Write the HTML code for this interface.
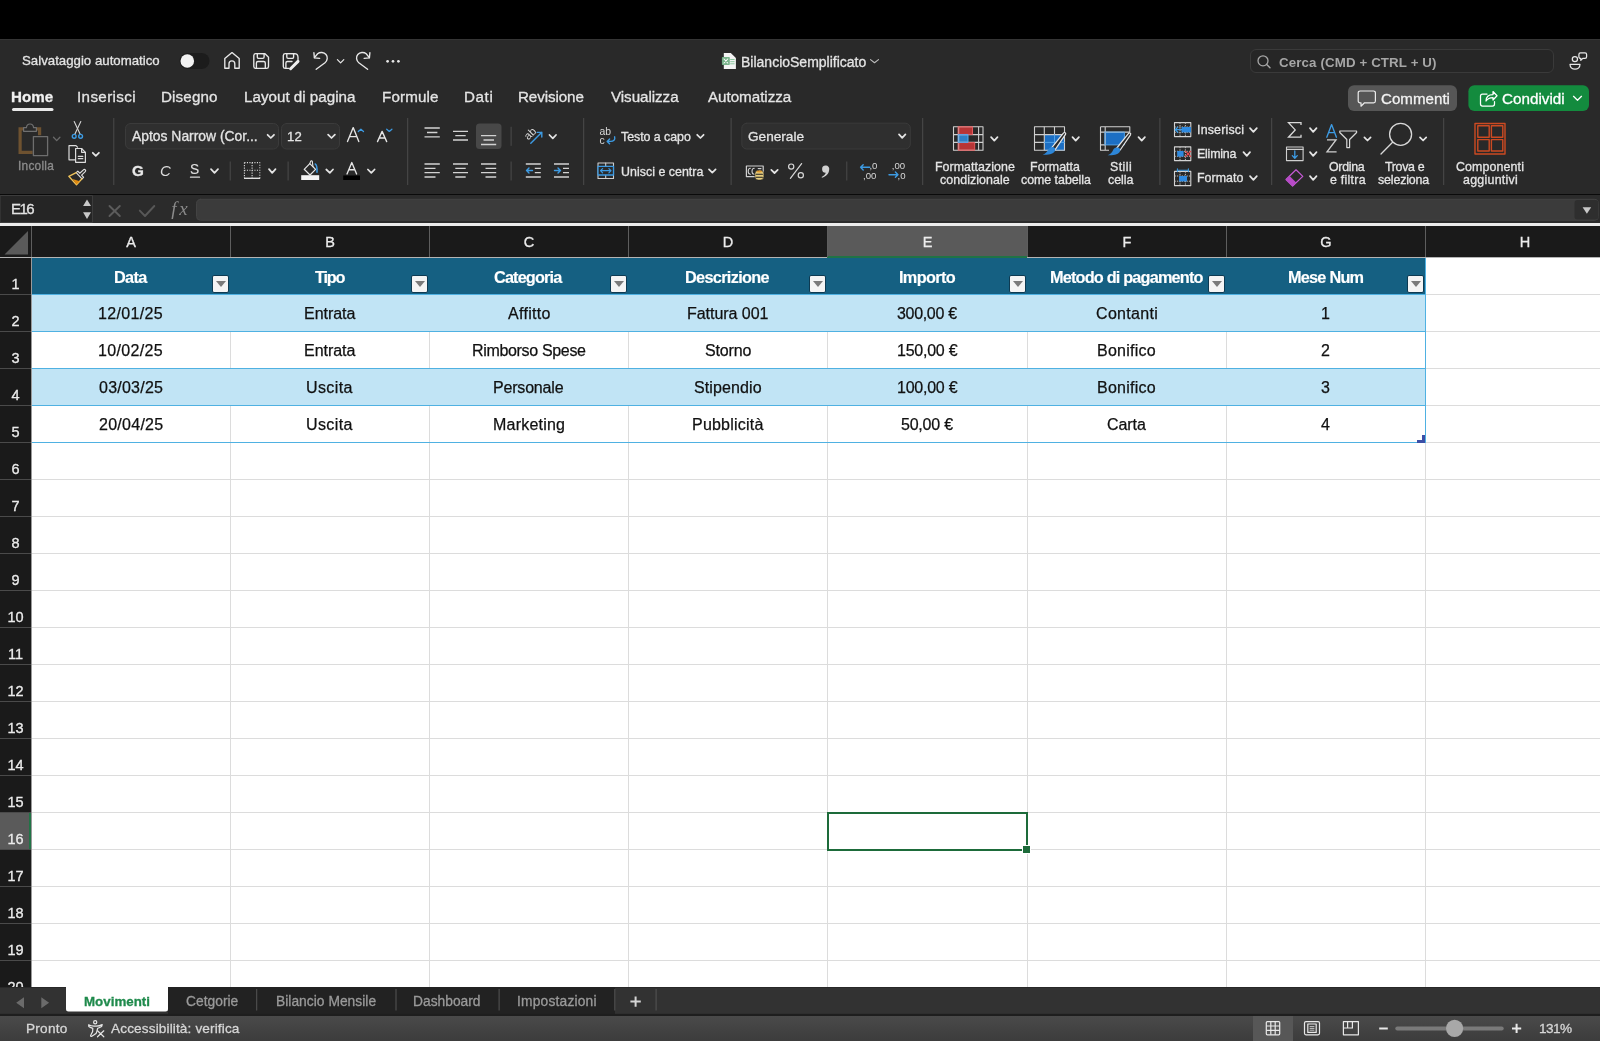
<!DOCTYPE html>
<html><head><meta charset="utf-8">
<style>
*{margin:0;padding:0;box-sizing:border-box}
html,body{width:1600px;height:1041px;overflow:hidden;background:#292929;font-family:"Liberation Sans",sans-serif}
.a{position:absolute;white-space:nowrap}
.t{position:absolute;white-space:nowrap;line-height:1;color:#e6e6e6;-webkit-text-stroke:0.3px currentColor;will-change:transform}
svg{position:absolute;overflow:visible}
#grid{position:absolute;left:0;top:226px;width:1600px;height:761px;background:#fff;overflow:hidden}
.ch{position:absolute;top:0;height:31px;background:#1a1a1a;color:#e8e8e8;font-size:15px;text-align:center;line-height:31px}
.rh{position:absolute;left:0;width:31px;background:#1a1a1a;color:#e8e8e8;font-size:15px;text-align:center}
.cell{position:absolute;font-size:16px;color:#111;text-align:center}
.hd{position:absolute;font-size:16px;font-weight:bold;color:#fff;text-align:center}
.fb{position:absolute;width:17px;height:17.5px;background:#f4f4f4;border:1px solid #0d3a52;border-radius:2px}
.fb:after{content:"";position:absolute;left:3px;top:5px;border-left:5px solid transparent;border-right:5px solid transparent;border-top:6px solid #7a7a7a}
.tab{position:absolute;top:987px;height:28px;color:#8f8f8f;font-size:13.5px;line-height:28px;text-align:center}
.sep{position:absolute;width:1px;background:#4a4a4a}
.lbl{position:absolute;white-space:nowrap;line-height:1;color:#e6e6e6;font-size:12.4px;text-align:center}
</style></head><body>
<!-- top black bar -->
<div class="a" style="left:0;top:0;width:1600px;height:39px;background:#000"></div>
<div class="a" style="left:0;top:39px;width:1600px;height:1px;background:#353535"></div>

<!-- ribbon bottom -->
<div class="a" style="left:0;top:193.6px;width:1600px;height:1.6px;background:#0a0a0a"></div>
<!-- formula bar -->
<div class="a" style="left:0;top:195px;width:1600px;height:28px;background:#2b2b2b"></div>
<div class="a" style="left:0;top:223px;width:1600px;height:3.4px;background:#ececec"></div>

<div class="a" style="left:32px;top:258px;width:1568px;height:729px;background:#fff"></div>
<div class="a" style="left:32px;top:294px;width:1568px;height:1px;background:#dcdcdc"></div>
<div class="a" style="left:32px;top:331px;width:1568px;height:1px;background:#dcdcdc"></div>
<div class="a" style="left:32px;top:368px;width:1568px;height:1px;background:#dcdcdc"></div>
<div class="a" style="left:32px;top:405px;width:1568px;height:1px;background:#dcdcdc"></div>
<div class="a" style="left:32px;top:442px;width:1568px;height:1px;background:#dcdcdc"></div>
<div class="a" style="left:32px;top:479px;width:1568px;height:1px;background:#dcdcdc"></div>
<div class="a" style="left:32px;top:516px;width:1568px;height:1px;background:#dcdcdc"></div>
<div class="a" style="left:32px;top:553px;width:1568px;height:1px;background:#dcdcdc"></div>
<div class="a" style="left:32px;top:590px;width:1568px;height:1px;background:#dcdcdc"></div>
<div class="a" style="left:32px;top:627px;width:1568px;height:1px;background:#dcdcdc"></div>
<div class="a" style="left:32px;top:664px;width:1568px;height:1px;background:#dcdcdc"></div>
<div class="a" style="left:32px;top:701px;width:1568px;height:1px;background:#dcdcdc"></div>
<div class="a" style="left:32px;top:738px;width:1568px;height:1px;background:#dcdcdc"></div>
<div class="a" style="left:32px;top:775px;width:1568px;height:1px;background:#dcdcdc"></div>
<div class="a" style="left:32px;top:812px;width:1568px;height:1px;background:#dcdcdc"></div>
<div class="a" style="left:32px;top:849px;width:1568px;height:1px;background:#dcdcdc"></div>
<div class="a" style="left:32px;top:886px;width:1568px;height:1px;background:#dcdcdc"></div>
<div class="a" style="left:32px;top:923px;width:1568px;height:1px;background:#dcdcdc"></div>
<div class="a" style="left:32px;top:960px;width:1568px;height:1px;background:#dcdcdc"></div>
<div class="a" style="left:230px;top:258px;width:1px;height:729px;background:#dcdcdc"></div>
<div class="a" style="left:429px;top:258px;width:1px;height:729px;background:#dcdcdc"></div>
<div class="a" style="left:628px;top:258px;width:1px;height:729px;background:#dcdcdc"></div>
<div class="a" style="left:827px;top:258px;width:1px;height:729px;background:#dcdcdc"></div>
<div class="a" style="left:1027px;top:258px;width:1px;height:729px;background:#dcdcdc"></div>
<div class="a" style="left:1226px;top:258px;width:1px;height:729px;background:#dcdcdc"></div>
<div class="a" style="left:1425px;top:258px;width:1px;height:729px;background:#dcdcdc"></div>
<div class="a" style="left:32px;top:258px;width:1393px;height:36px;background:#156082"></div>
<div class="a" style="left:32px;top:295px;width:1393px;height:36px;background:#c1e4f5"></div>
<div class="a" style="left:32px;top:369px;width:1393px;height:36px;background:#c1e4f5"></div>
<div class="a" style="left:32px;top:294px;width:1393px;height:1px;background:#4fb1e2"></div>
<div class="a" style="left:32px;top:331px;width:1393px;height:1px;background:#4fb1e2"></div>
<div class="a" style="left:32px;top:368px;width:1393px;height:1px;background:#4fb1e2"></div>
<div class="a" style="left:32px;top:405px;width:1393px;height:1px;background:#4fb1e2"></div>
<div class="a" style="left:32px;top:442px;width:1393px;height:1px;background:#4fb1e2"></div>
<div class="a" style="left:1425px;top:258px;width:1px;height:185px;background:#4fb1e2"></div>
<div class="a" style="left:0px;top:226px;width:1600px;height:31px;background:#1a1a1a"></div>
<div class="a" style="left:0px;top:257px;width:1600px;height:1px;background:#b4b4b4"></div>
<div class="a" style="left:827px;top:226px;width:200px;height:30px;background:#5a5a5a"></div>
<div class="a" style="left:827px;top:256px;width:200px;height:2px;background:#217346"></div>
<div class="a" style="left:31px;top:226px;width:1px;height:31px;background:#5e5e5e"></div>
<div class="a" style="left:230px;top:226px;width:1px;height:31px;background:#5e5e5e"></div>
<div class="a" style="left:429px;top:226px;width:1px;height:31px;background:#5e5e5e"></div>
<div class="a" style="left:628px;top:226px;width:1px;height:31px;background:#5e5e5e"></div>
<div class="a" style="left:827px;top:226px;width:1px;height:31px;background:#5e5e5e"></div>
<div class="a" style="left:1027px;top:226px;width:1px;height:31px;background:#5e5e5e"></div>
<div class="a" style="left:1226px;top:226px;width:1px;height:31px;background:#5e5e5e"></div>
<div class="a" style="left:1425px;top:226px;width:1px;height:31px;background:#5e5e5e"></div>
<div class="t" style="left:32px;top:235px;width:198px;text-align:center;font-size:14.5px;color:#ececec">A</div>
<div class="t" style="left:231px;top:235px;width:198px;text-align:center;font-size:14.5px;color:#ececec">B</div>
<div class="t" style="left:430px;top:235px;width:198px;text-align:center;font-size:14.5px;color:#ececec">C</div>
<div class="t" style="left:629px;top:235px;width:198px;text-align:center;font-size:14.5px;color:#ececec">D</div>
<div class="t" style="left:828px;top:235px;width:199px;text-align:center;font-size:14.5px;color:#ececec">E</div>
<div class="t" style="left:1028px;top:235px;width:198px;text-align:center;font-size:14.5px;color:#ececec">F</div>
<div class="t" style="left:1227px;top:235px;width:198px;text-align:center;font-size:14.5px;color:#ececec">G</div>
<div class="t" style="left:1426px;top:235px;width:198px;text-align:center;font-size:14.5px;color:#ececec">H</div>
<div class="a" style="left:0px;top:226px;width:31px;height:31px;background:#1a1a1a"></div>
<svg style="left:0;top:226px" width="31" height="31"><path d="M4.5 28.5 L28 5 L28 28.5 Z" fill="#5a5a5a"/></svg>
<div class="a" style="left:0px;top:258px;width:31px;height:729px;background:#1a1a1a"></div>
<div class="a" style="left:0px;top:812px;width:31px;height:37px;background:#5a5a5a"></div>
<div class="a" style="left:29px;top:812px;width:2px;height:37px;background:#217346"></div>
<div class="a" style="left:31px;top:258px;width:1px;height:729px;background:#9a9a9a"></div>
<div class="a" style="left:0px;top:294px;width:31px;height:1px;background:#4a4a4a"></div>
<div class="a" style="left:0px;top:331px;width:31px;height:1px;background:#4a4a4a"></div>
<div class="a" style="left:0px;top:368px;width:31px;height:1px;background:#4a4a4a"></div>
<div class="a" style="left:0px;top:405px;width:31px;height:1px;background:#4a4a4a"></div>
<div class="a" style="left:0px;top:442px;width:31px;height:1px;background:#4a4a4a"></div>
<div class="a" style="left:0px;top:479px;width:31px;height:1px;background:#4a4a4a"></div>
<div class="a" style="left:0px;top:516px;width:31px;height:1px;background:#4a4a4a"></div>
<div class="a" style="left:0px;top:553px;width:31px;height:1px;background:#4a4a4a"></div>
<div class="a" style="left:0px;top:590px;width:31px;height:1px;background:#4a4a4a"></div>
<div class="a" style="left:0px;top:627px;width:31px;height:1px;background:#4a4a4a"></div>
<div class="a" style="left:0px;top:664px;width:31px;height:1px;background:#4a4a4a"></div>
<div class="a" style="left:0px;top:701px;width:31px;height:1px;background:#4a4a4a"></div>
<div class="a" style="left:0px;top:738px;width:31px;height:1px;background:#4a4a4a"></div>
<div class="a" style="left:0px;top:775px;width:31px;height:1px;background:#4a4a4a"></div>
<div class="a" style="left:0px;top:812px;width:31px;height:1px;background:#4a4a4a"></div>
<div class="a" style="left:0px;top:849px;width:31px;height:1px;background:#4a4a4a"></div>
<div class="a" style="left:0px;top:886px;width:31px;height:1px;background:#4a4a4a"></div>
<div class="a" style="left:0px;top:923px;width:31px;height:1px;background:#4a4a4a"></div>
<div class="a" style="left:0px;top:960px;width:31px;height:1px;background:#4a4a4a"></div>
<div class="t" style="left:0;top:277px;width:31px;text-align:center;font-size:14.5px;color:#ececec">1</div>
<div class="t" style="left:0;top:314px;width:31px;text-align:center;font-size:14.5px;color:#ececec">2</div>
<div class="t" style="left:0;top:351px;width:31px;text-align:center;font-size:14.5px;color:#ececec">3</div>
<div class="t" style="left:0;top:388px;width:31px;text-align:center;font-size:14.5px;color:#ececec">4</div>
<div class="t" style="left:0;top:425px;width:31px;text-align:center;font-size:14.5px;color:#ececec">5</div>
<div class="t" style="left:0;top:462px;width:31px;text-align:center;font-size:14.5px;color:#ececec">6</div>
<div class="t" style="left:0;top:499px;width:31px;text-align:center;font-size:14.5px;color:#ececec">7</div>
<div class="t" style="left:0;top:536px;width:31px;text-align:center;font-size:14.5px;color:#ececec">8</div>
<div class="t" style="left:0;top:573px;width:31px;text-align:center;font-size:14.5px;color:#ececec">9</div>
<div class="t" style="left:0;top:610px;width:31px;text-align:center;font-size:14.5px;color:#ececec">10</div>
<div class="t" style="left:0;top:647px;width:31px;text-align:center;font-size:14.5px;color:#ececec">11</div>
<div class="t" style="left:0;top:684px;width:31px;text-align:center;font-size:14.5px;color:#ececec">12</div>
<div class="t" style="left:0;top:721px;width:31px;text-align:center;font-size:14.5px;color:#ececec">13</div>
<div class="t" style="left:0;top:758px;width:31px;text-align:center;font-size:14.5px;color:#ececec">14</div>
<div class="t" style="left:0;top:795px;width:31px;text-align:center;font-size:14.5px;color:#ececec">15</div>
<div class="t" style="left:0;top:832px;width:31px;text-align:center;font-size:14.5px;color:#ececec">16</div>
<div class="t" style="left:0;top:869px;width:31px;text-align:center;font-size:14.5px;color:#ececec">17</div>
<div class="t" style="left:0;top:906px;width:31px;text-align:center;font-size:14.5px;color:#ececec">18</div>
<div class="t" style="left:0;top:943px;width:31px;text-align:center;font-size:14.5px;color:#ececec">19</div>
<div class="t" style="left:0;top:980px;width:31px;text-align:center;font-size:14.5px;color:#ececec">20</div>
<div class="t" style="left:113.65px;top:268.80px;font-size:16.3px;font-weight:bold;color:#fff;letter-spacing:-0.633px;-webkit-text-stroke:0.15px currentColor">Data</div>
<div class="fb" style="left:212px;top:275px"></div>
<div class="t" style="left:315.05px;top:268.80px;font-size:16.3px;font-weight:bold;color:#fff;letter-spacing:-1.233px;-webkit-text-stroke:0.15px currentColor">Tipo</div>
<div class="fb" style="left:411px;top:275px"></div>
<div class="t" style="left:494.43px;top:268.80px;font-size:16.3px;font-weight:bold;color:#fff;letter-spacing:-0.856px;-webkit-text-stroke:0.15px currentColor">Categoria</div>
<div class="fb" style="left:610px;top:275px"></div>
<div class="t" style="left:685.40px;top:268.80px;font-size:16.3px;font-weight:bold;color:#fff;letter-spacing:-0.680px;-webkit-text-stroke:0.15px currentColor">Descrizione</div>
<div class="fb" style="left:809px;top:275px"></div>
<div class="t" style="left:898.90px;top:268.80px;font-size:16.3px;font-weight:bold;color:#fff;letter-spacing:-0.650px;-webkit-text-stroke:0.15px currentColor">Importo</div>
<div class="fb" style="left:1009px;top:275px"></div>
<div class="t" style="left:1049.90px;top:268.80px;font-size:16.3px;font-weight:bold;color:#fff;letter-spacing:-0.817px;-webkit-text-stroke:0.15px currentColor">Metodo di pagamento</div>
<div class="fb" style="left:1208px;top:275px"></div>
<div class="t" style="left:1287.90px;top:268.80px;font-size:16.3px;font-weight:bold;color:#fff;letter-spacing:-0.771px;-webkit-text-stroke:0.15px currentColor">Mese Num</div>
<div class="fb" style="left:1407px;top:275px"></div>
<div class="t" style="left:98.45px;top:306.16px;font-size:16px;color:#111;letter-spacing:0.329px;-webkit-text-stroke:0.25px currentColor">12/01/25</div>
<div class="t" style="left:303.65px;top:306.16px;font-size:16px;color:#111;letter-spacing:-0.033px;-webkit-text-stroke:0.25px currentColor">Entrata</div>
<div class="t" style="left:508.12px;top:306.16px;font-size:16px;color:#111;letter-spacing:0.308px;-webkit-text-stroke:0.25px currentColor">Affitto</div>
<div class="t" style="left:687.08px;top:306.16px;font-size:16px;color:#111;letter-spacing:-0.045px;-webkit-text-stroke:0.25px currentColor">Fattura 001</div>
<div class="t" style="left:897.27px;top:306.16px;font-size:16px;color:#111;letter-spacing:-0.321px;-webkit-text-stroke:0.25px currentColor">300,00 €</div>
<div class="t" style="left:1096.20px;top:306.16px;font-size:16px;color:#111;letter-spacing:0.329px;-webkit-text-stroke:0.25px currentColor">Contanti</div>
<div class="t" style="left:1321.20px;top:306.16px;font-size:16px;color:#111;letter-spacing:0.000px;-webkit-text-stroke:0.25px currentColor">1</div>
<div class="t" style="left:98.45px;top:343.16px;font-size:16px;color:#111;letter-spacing:0.329px;-webkit-text-stroke:0.25px currentColor">10/02/25</div>
<div class="t" style="left:303.65px;top:343.16px;font-size:16px;color:#111;letter-spacing:-0.033px;-webkit-text-stroke:0.25px currentColor">Entrata</div>
<div class="t" style="left:471.70px;top:343.16px;font-size:16px;color:#111;letter-spacing:-0.331px;-webkit-text-stroke:0.25px currentColor">Rimborso Spese</div>
<div class="t" style="left:704.80px;top:343.16px;font-size:16px;color:#111;letter-spacing:-0.140px;-webkit-text-stroke:0.25px currentColor">Storno</div>
<div class="t" style="left:896.67px;top:343.16px;font-size:16px;color:#111;letter-spacing:-0.236px;-webkit-text-stroke:0.25px currentColor">150,00 €</div>
<div class="t" style="left:1097.33px;top:343.16px;font-size:16px;color:#111;letter-spacing:0.264px;-webkit-text-stroke:0.25px currentColor">Bonifico</div>
<div class="t" style="left:1320.85px;top:343.16px;font-size:16px;color:#111;letter-spacing:0.000px;-webkit-text-stroke:0.25px currentColor">2</div>
<div class="t" style="left:99.05px;top:380.16px;font-size:16px;color:#111;letter-spacing:0.243px;-webkit-text-stroke:0.25px currentColor">03/03/25</div>
<div class="t" style="left:306.20px;top:380.16px;font-size:16px;color:#111;letter-spacing:0.380px;-webkit-text-stroke:0.25px currentColor">Uscita</div>
<div class="t" style="left:493.45px;top:380.16px;font-size:16px;color:#111;letter-spacing:-0.188px;-webkit-text-stroke:0.25px currentColor">Personale</div>
<div class="t" style="left:694.17px;top:380.16px;font-size:16px;color:#111;letter-spacing:0.119px;-webkit-text-stroke:0.25px currentColor">Stipendio</div>
<div class="t" style="left:896.67px;top:380.16px;font-size:16px;color:#111;letter-spacing:-0.236px;-webkit-text-stroke:0.25px currentColor">100,00 €</div>
<div class="t" style="left:1097.33px;top:380.16px;font-size:16px;color:#111;letter-spacing:0.264px;-webkit-text-stroke:0.25px currentColor">Bonifico</div>
<div class="t" style="left:1321.15px;top:380.16px;font-size:16px;color:#111;letter-spacing:0.000px;-webkit-text-stroke:0.25px currentColor">3</div>
<div class="t" style="left:98.85px;top:417.16px;font-size:16px;color:#111;letter-spacing:0.271px;-webkit-text-stroke:0.25px currentColor">20/04/25</div>
<div class="t" style="left:306.20px;top:417.16px;font-size:16px;color:#111;letter-spacing:0.380px;-webkit-text-stroke:0.25px currentColor">Uscita</div>
<div class="t" style="left:492.82px;top:417.16px;font-size:16px;color:#111;letter-spacing:0.219px;-webkit-text-stroke:0.25px currentColor">Marketing</div>
<div class="t" style="left:691.70px;top:417.16px;font-size:16px;color:#111;letter-spacing:0.211px;-webkit-text-stroke:0.25px currentColor">Pubblicità</div>
<div class="t" style="left:901.27px;top:417.16px;font-size:16px;color:#111;letter-spacing:-0.225px;-webkit-text-stroke:0.25px currentColor">50,00 €</div>
<div class="t" style="left:1107.20px;top:417.16px;font-size:16px;color:#111;letter-spacing:-0.075px;-webkit-text-stroke:0.25px currentColor">Carta</div>
<div class="t" style="left:1321.25px;top:417.16px;font-size:16px;color:#111;letter-spacing:0.000px;-webkit-text-stroke:0.25px currentColor">4</div>
<svg style="left:1417px;top:435px" width="8" height="8"><path d="M5 0h3v8h-8v-3h5z" fill="#3c4fa6"/></svg>
<div class="a" style="left:827px;top:812px;width:201px;height:39px;border:2px solid #1d6b3a"></div>
<div class="a" style="left:1023px;top:846px;width:7px;height:7px;background:#1d6b3a;outline:1px solid #fff"></div>

<svg style="left:0;top:0" width="1600" height="1041" viewBox="0 0 1600 1041" fill="none" stroke-linecap="round" stroke-linejoin="round">
<!-- ===== title bar ===== -->
<!-- toggle -->
<rect x="179.5" y="53" width="30" height="16" rx="8" fill="#1c1c1c"/>
<circle cx="187.3" cy="61" r="6.8" fill="#f2f2f2"/>
<g stroke="#e8e8e8" stroke-width="1.35">
<!-- home -->
<path d="M224.8 68.2 V58.6 L232 52.6 L239.2 58.6 V68.2 H234.8 V63.8 A2.9 2.9 0 0 0 229 63.8 V68.2 Z"/>
<!-- save -->
<path d="M253.8 55.5 A2 2 0 0 1 255.8 53.7 H265 L268.5 57.2 V66.5 A2 2 0 0 1 266.5 68.4 H255.8 A2 2 0 0 1 253.8 66.5 Z"/>
<path d="M257.3 53.8 V57 A1.3 1.3 0 0 0 258.6 58.3 H262.8 A1.3 1.3 0 0 0 264.1 57 V53.8"/>
<path d="M256.4 68.3 V63 A1.5 1.5 0 0 1 257.9 61.5 H263.8 A1.5 1.5 0 0 1 265.3 63 V68.3"/>
<!-- save as -->
<path d="M289 68.4 H285.3 A2 2 0 0 1 283.3 66.5 V55.5 A2 2 0 0 1 285.3 53.7 H294.5 A3.6 3.6 0 0 1 298 57.2 V59.5"/>
<path d="M286.8 53.8 V57 A1.3 1.3 0 0 0 288.1 58.3 H292.3 A1.3 1.3 0 0 0 293.6 57 V53.8"/>
<path d="M285.9 68.3 V63 A1.5 1.5 0 0 1 287.4 61.5 H292"/>
<!-- undo -->
<path d="M316.2 69.3 L325 62.8 C327.6 60.5 328 56.8 326 54.5 C324 52.2 320 51.8 317.6 53.8 L314.5 57.6"/>
<path d="M313.9 52.6 L314.4 57.9 L319.7 58.3"/>
<path d="M337.4 59.6 L340.6 62.8 L343.8 59.6" stroke-width="1.2"/>
<!-- redo -->
<path d="M367.6 69.3 L358.8 62.8 C356.2 60.5 355.8 56.8 357.8 54.5 C359.8 52.2 363.8 51.8 366.2 53.8 L369.3 57.6"/>
<path d="M369.9 52.6 L369.4 57.9 L364.1 58.3"/>
</g>
<path d="M290.6 68.7 L298 61.4" stroke="#f0f0f0" stroke-width="3"/>
<circle cx="387.6" cy="61.3" r="1.35" fill="#e8e8e8"/><circle cx="393" cy="61.3" r="1.35" fill="#e8e8e8"/><circle cx="398.4" cy="61.3" r="1.35" fill="#e8e8e8"/>
<!-- excel doc icon -->
<path d="M723.8 53 H730.8 L735.9 58.1 V68.9 H723.8 Z" fill="#f4f4f4"/>
<rect x="721.9" y="57" width="7.9" height="8" rx="0.8" fill="#79b38b"/>
<path d="M724 59 L727.7 63 M727.7 59 L724 63" stroke="#fff" stroke-width="1.1"/>
<path d="M730.6 59.5 H734.2 M730.6 61.7 H734.2 M730.6 63.8 H734.2" stroke="#8cc9a0" stroke-width="1"/>
<path d="M870.5 59.6 L874.5 62.8 L878.5 59.6" stroke="#bdbdbd" stroke-width="1.1"/>
<!-- search box -->
<rect x="1250.5" y="49.5" width="303" height="23" rx="5.5" fill="#262626" stroke="#3a3a3a" stroke-width="1"/>
<circle cx="1263" cy="60.8" r="5" stroke="#a8a8a8" stroke-width="1.3"/>
<path d="M1266.7 64.5 L1270 67.8" stroke="#a8a8a8" stroke-width="1.4"/>
<!-- people icon -->
<g stroke="#e8e8e8" stroke-width="1.25">
<circle cx="1574.9" cy="59.1" r="2.6"/>
<path d="M1570 64.3 H1580 C1580 67.4 1577.6 69.2 1575 69.2 C1572.4 69.2 1570 67.4 1570 64.3 Z"/>
<path d="M1580.5 52.9 H1585 A1.6 1.6 0 0 1 1586.6 54.5 V56.8 A1.6 1.6 0 0 1 1585 58.4 H1582.8 L1580.8 60.4 V58.4 A1.6 1.6 0 0 1 1578.9 56.8 V54.5 A1.6 1.6 0 0 1 1580.5 52.9 Z"/>
</g>
<!-- Commenti button -->
<rect x="1348" y="85.2" width="109" height="25.8" rx="6" fill="#565656"/>
<path d="M1360 91 H1373.6 A1.8 1.8 0 0 1 1375.4 92.8 V101 A1.8 1.8 0 0 1 1373.6 102.8 H1364.5 L1361 106.2 V102.8 H1360 A1.8 1.8 0 0 1 1358.2 101 V92.8 A1.8 1.8 0 0 1 1360 91 Z" stroke="#ececec" stroke-width="1.2"/>
<!-- Condividi -->
<rect x="1468.4" y="85.2" width="120.6" height="25.8" rx="6" fill="#138b3e"/>
<g stroke="#ffffff" stroke-width="1.25">
<path d="M1487 94 H1482.5 A2 2 0 0 0 1480.5 96 V104 A2 2 0 0 0 1482.5 106 H1492.5 A2 2 0 0 0 1494.5 104 V101.5"/>
<path d="M1486 101 C1486 96.5 1489 94.5 1493 94.5 V91.5 L1497 95.8 L1493 100 V97.5 C1490 97.5 1487.5 98.5 1486 101 Z"/>
<path d="M1573.5 96.3 L1577.5 100.3 L1581.5 96.3"/>
</g>

<!-- formula input -->
<rect x="196.5" y="199.3" width="1402" height="21" rx="4" fill="#3b3b3b" stroke="#434343" stroke-width="1"/>
<rect x="1574.5" y="200" width="24" height="19.5" rx="3" fill="#2e2e2e"/>
<path d="M1582.6 207.2 H1591.2 L1586.9 213.8 Z" fill="#c8c8c8"/>
<!-- name box -->
<rect x="0.5" y="195.5" width="92" height="27" fill="#252525" stroke="#3c3c3c"/>
<!-- ===== ribbon ===== -->
<!-- Home underline -->
<rect x="12" y="108" width="41.5" height="3" rx="1.5" fill="#e8e8e8"/>
<!-- separators -->
<g fill="#4b4b4b">
<rect x="113.3" y="118" width="1" height="67"/>
<rect x="407.2" y="118" width="1" height="67"/>
<rect x="583.2" y="118" width="1" height="67"/>
<rect x="730.6" y="118" width="1" height="67"/>
<rect x="922.2" y="118" width="1" height="67"/>
<rect x="1159.4" y="118" width="1" height="67"/>
<rect x="1271.2" y="118" width="1" height="67"/>
<rect x="1443.2" y="118" width="1" height="67"/>
<rect x="229.7" y="161.5" width="1" height="19"/>
<rect x="287.6" y="161.5" width="1" height="19"/>
<rect x="510.6" y="126.8" width="1" height="19"/>
<rect x="510.6" y="161.5" width="1" height="19"/>
<rect x="846.3" y="161.5" width="1" height="19"/>
</g>
<!-- combos -->
<rect x="125.5" y="123.5" width="153" height="25.5" rx="5" fill="#2f2f2f" stroke="#3b3b3b"/>
<rect x="281.5" y="123.5" width="58" height="25.5" rx="5" fill="#2f2f2f" stroke="#3b3b3b"/>
<rect x="741.8" y="123.2" width="168.5" height="25.8" rx="5" fill="#2f2f2f" stroke="#3b3b3b"/>
<!-- selected bottom-align bg -->
<rect x="476" y="123.5" width="25.5" height="25.5" rx="3.5" fill="#484848"/>
<!-- chevrons -->
<g stroke="#e4e4e4" stroke-width="1.75">
<path d="M267.6 134.8 L270.8 138 L274 134.8"/>
<path d="M328.1 134.6 L331.5 138 L334.9 134.6"/>
<path d="M92.8 152.8 L95.8 155.8 L98.9 152.8"/>
<path d="M211 169.2 L214.5 172.8 L218 169.2"/>
<path d="M269 169.2 L272.2 172.8 L275.5 169.2"/>
<path d="M326.3 169.5 L329.8 172.9 L333 169.5"/>
<path d="M367.9 169.5 L371.3 172.9 L374.6 169.5"/>
<path d="M549.5 135 L552.8 138.4 L556 135"/>
<path d="M697.2 134.8 L700.4 138 L703.6 134.8"/>
<path d="M709 169.4 L712.3 172.6 L715.6 169.4"/>
<path d="M899 134.4 L902.2 137.8 L905.4 134.4"/>
<path d="M771.3 169.9 L774.5 173 L777.7 169.9"/>
<path d="M991.1 137.2 L994.3 140.6 L997.5 137.2"/>
<path d="M1072.5 137.2 L1075.7 140.6 L1078.9 137.2"/>
<path d="M1138.5 137.2 L1141.7 140.6 L1144.9 137.2"/>
<path d="M1250 128.2 L1253.4 131.8 L1256.8 128.2"/>
<path d="M1243.5 152.2 L1246.8 155.8 L1250 152.2"/>
<path d="M1250 176.2 L1253.4 179.8 L1256.8 176.2"/>
<path d="M1310 128.2 L1313.2 131.8 L1316.5 128.2"/>
<path d="M1310 152.2 L1313.2 155.8 L1316.5 152.2"/>
<path d="M1310 176.2 L1313.2 179.8 L1316.5 176.2"/>
<path d="M1364.4 137.4 L1367.5 140.5 L1370.6 137.4"/>
<path d="M1420 137.4 L1423.1 140.5 L1426.2 137.4"/>
</g>
<path d="M53.5 137.3 L56.7 140.6 L59.9 137.3" stroke="#6a6a6a" stroke-width="1.3"/>
<!-- paste (disabled) -->
<path d="M24 128.9 H20.1 V152.3 H32.6" stroke="#6e5230" stroke-width="3.2" stroke-linecap="butt" stroke-linejoin="miter"/>
<path d="M36.4 128.9 H39.6 V135.2" stroke="#6e5230" stroke-width="3.2" stroke-linecap="butt" stroke-linejoin="miter"/>
<path d="M23.6 131.3 V127.6 H26.4 C27 122.8 33 122.8 33.6 127.6 H36.4 V131.3 Z" stroke="#707070" stroke-width="1.2" fill="#2a2a2a"/>
<rect x="33.4" y="136.6" width="14.2" height="19" stroke="#6e6e6e" stroke-width="1.3" fill="#2a2a2a"/>
<!-- scissors -->
<g stroke="#d6d6d6" stroke-width="1.1">
<path d="M74.2 121.6 L80.3 134.4"/>
<path d="M80.8 121.6 L74.7 134.4"/>
</g>
<g stroke="#3d9be3" stroke-width="1.4">
<circle cx="74.2" cy="136.3" r="1.9"/><circle cx="80.6" cy="136.3" r="1.9"/>
</g>
<!-- copy -->
<g stroke="#dcdcdc" stroke-width="1.2">
<path d="M75.2 159.8 H69 V145.6 H76 L77.5 147.2"/>
<path d="M75.6 148.5 H81.6 L85.4 152.3 V162.3 H75.6 Z"/>
<path d="M81.6 148.5 V152.3 H85.4"/>
<path d="M78.3 156.4 H82.8 M78.3 158.7 H82.8"/>
</g>
<!-- format painter -->
<path d="M76.2 172.6 L77.8 171.1 L79.8 173.25 L83.45 169.8 A1.3 1.3 0 0 1 85.25 171.7 L81.6 175.15 L83.6 177.3 L82 178.8 Z" stroke="#e0e0e0" stroke-width="1.15"/>
<path d="M76.2 172.6 L68.8 176.3 L76.5 184.8 L82 178.8" stroke="#f0c35a" stroke-width="1.3"/>
<path d="M72.6 179 L79.8 181.2 L76.5 184.5 Z" fill="#e08a10"/>
<!-- grow/shrink font -->
<g stroke="#e6e6e6" stroke-width="1.35">
<path d="M347.5 141.6 L353.2 127.6 L358.8 141.6 M349.6 136.6 H356.8"/>
<path d="M377.5 141.6 L382.1 131.4 L386.7 141.6 M379.2 138 H385"/>
<path d="M347 174 L351.8 162.5 L356.6 174 M348.8 169.7 H354.8"/>
</g>
<g stroke="#3d9be3" stroke-width="1.3">
<path d="M358.3 131.6 L360.9 129.2 L363.5 131.6"/>
<path d="M386.7 129.2 L389.3 131.4 L391.9 129.2"/>
</g>
<!-- bold/italic/underline -->
<path d="M190.5 177.2 H199.5" stroke="#d8d8d8" stroke-width="1.3"/>
<!-- borders icon -->
<g stroke="#d8d8d8" stroke-width="1.1" stroke-dasharray="1.1 1.4" stroke-linecap="butt">
<path d="M244.4 162.6 H259.8 V178 M244.4 162.6 V178 M252.1 162.6 V178 M244.4 170.3 H259.8"/>
</g>
<path d="M244 178.3 H260.2" stroke="#e0e0e0" stroke-width="1.4" stroke-linecap="butt"/>
<!-- fill color -->
<path d="M304.2 169.3 L309.8 163.6 L315.6 169.4 L310 175 Z" stroke="#e6e6e6" stroke-width="1.2"/>
<path d="M309.8 163.6 L310.6 161.4 C311 160.6 312 160.6 312.3 161.4 L313 166.8" stroke="#e6e6e6" stroke-width="1.1"/>
<path d="M315.2 164 C316.8 164.6 317.2 166.5 317 172.2" stroke="#3d9be3" stroke-width="1.5"/>
<rect x="301.2" y="175.2" width="18" height="4.8" fill="#f4f4f4"/>
<rect x="343.2" y="175.5" width="16.8" height="4.5" fill="#000"/>

<!-- alignment lines -->
<g stroke="#d2d2d2" stroke-width="1.3" stroke-linecap="butt">
<path d="M424.5 128 H439.8 M427 132.5 H437.4 M424.5 136.8 H439.8"/>
<path d="M453 131.3 H468 M455.3 135.7 H465.7 M453 140 H468"/>
<path d="M481 135.7 H496.2 M483.5 140 H494 M481 144.5 H496.2"/>
<path d="M424.5 164 H439.8 M424.5 168.3 H435.5 M424.5 172.6 H439.8 M424.5 177 H435.5"/>
<path d="M453 164 H468 M455.3 168.3 H465.7 M453 172.6 H468 M455.3 177 H465.7"/>
<path d="M481 164 H496.2 M485.5 168.3 H496.2 M481 172.6 H496.2 M485.5 177 H496.2"/>
<path d="M525.8 164 H540.8 M534.8 168.3 H540.8 M534.8 172.6 H540.8 M525.8 177 H540.8"/>
<path d="M554 164 H569 M563 168.3 H569 M563 172.6 H569 M554 177 H569"/>
</g>
<g stroke="#3d9be3" stroke-width="1.4">
<path d="M532.5 170.5 H526.5 M529 168 L526.5 170.5 L529 173"/>
<path d="M554.5 170.5 H560.5 M558 168 L560.5 170.5 L558 173"/>
<!-- orientation arrow -->
<path d="M530.8 143.3 L541.8 132.3 M537.2 132.4 H541.8 V137"/>
<!-- wrap arrow -->
<path d="M614.6 136.8 C615.5 140 613.5 141.4 610.5 141.4 H607.2 M609.6 139 L607.2 141.4 L609.6 143.8"/>
</g>
<text x="0" y="0" transform="translate(528.3 140.5) rotate(-45)" font-family="Liberation Sans" font-size="11" fill="#d8d8d8" stroke="none">ab</text>
<text x="599.4" y="135.3" font-family="Liberation Sans" font-size="10.4" fill="#d8d8d8" stroke="none">ab</text>
<text x="599.6" y="144.2" font-family="Liberation Sans" font-size="10.4" fill="#d8d8d8" stroke="none">c</text>
<!-- merge icon -->
<rect x="598" y="163" width="15.5" height="15.5" stroke="#cfcfcf" stroke-width="1.1"/>
<path d="M605.7 163 V166.5 M605.7 175 V178.5" stroke="#cfcfcf" stroke-width="1.1"/>
<rect x="598" y="166.4" width="15.5" height="8.6" stroke="#3d9be3" stroke-width="1.3" fill="#2a2a2a"/>
<path d="M600.5 170.7 H611 M602.6 168.6 L600.5 170.7 L602.6 172.8 M608.9 168.6 L611 170.7 L608.9 172.8" stroke="#3d9be3" stroke-width="1.2"/>
<!-- currency icon -->
<rect x="746.4" y="166" width="16.8" height="10.6" stroke="#d0d0d0" stroke-width="1.2"/>
<path d="M750.4 168.3 A2.2 3 0 0 0 750.4 174.3 M754.2 168.3 A2.2 3 0 0 0 754.2 174.3 M758.2 168.6 H761" stroke="#d0d0d0" stroke-width="1.1"/>
<rect x="754.9" y="170.2" width="8.9" height="9.9" rx="3.6" fill="#e6cd7e" stroke="#1e1e1e" stroke-width="0.6"/>
<ellipse cx="759.3" cy="171.5" rx="2.8" ry="0.9" fill="#e39a2a"/>
<path d="M756.2 174.2 H762.4 M756.2 177.2 H762.4" stroke="#1e1e1e" stroke-width="1.1" stroke-linecap="round"/>
<!-- percent -->
<circle cx="791.2" cy="166.6" r="2.6" stroke="#d8d8d8" stroke-width="1.2"/>
<circle cx="800.8" cy="175.2" r="2.6" stroke="#d8d8d8" stroke-width="1.2"/>
<path d="M801.6 163.6 L790.4 178.3" stroke="#d8d8d8" stroke-width="1.2"/>
<!-- comma -->
<path d="M825.6 165.6 A3.3 3.3 0 0 1 829.2 169.6 C829 173.8 826 176.8 822 177.8 L821.6 177 C824 175.8 825.5 174.2 825.8 172.8 A3.4 3.4 0 0 1 825.6 165.6 Z" fill="#d0d0d0"/>
<!-- decimals arrows -->
<g stroke="#3d9be3" stroke-width="1.4">
<path d="M869.8 167.3 H860.6 M863.2 164.7 L860.6 167.3 L863.2 169.9"/>
<path d="M889 174.7 H898 M895.4 172.1 L898 174.7 L895.4 177.3"/>
</g>
<text x="869.4" y="169.4" font-family="Liberation Sans" font-size="9.6" fill="#d8d8d8">,0</text>
<text x="863" y="178.5" font-family="Liberation Sans" font-size="9.6" fill="#d8d8d8">,00</text>
<text x="891.8" y="169.4" font-family="Liberation Sans" font-size="9.6" fill="#d8d8d8">,00</text>
<text x="897.6" y="178.5" font-family="Liberation Sans" font-size="9.6" fill="#d8d8d8">,0</text>
<!-- fx / spinner / x / check -->
<path d="M83.1 206 L87 199.5 L91 206 Z M83.1 212.2 L87 219 L91 212.2 Z" fill="#c8c8c8"/>
<path d="M109.5 206 L119.8 216 M119.8 206 L109.5 216" stroke="#5c5c5c" stroke-width="1.9"/>
<path d="M139.8 210.6 L145 216 L154.3 206" stroke="#585858" stroke-width="1.9"/>
<text x="171.2" y="214.6" font-family="Liberation Serif" font-style="italic" font-size="19" fill="#8a8a8a" textLength="16.5">fx</text>

<!-- conditional formatting -->
<rect x="958.5" y="126.3" width="14" height="8.1" fill="#b83536"/>
<rect x="958.5" y="142.6" width="16.2" height="8.1" fill="#b83536"/>
<rect x="958.5" y="134.4" width="9.5" height="8.2" fill="#2f7fc6"/>
<g stroke="#cfcfcf" stroke-width="1.1" stroke-linecap="butt">
<rect x="953.5" y="126.8" width="29.5" height="23.5"/>
<path d="M953.5 134.6 H983 M953.5 142.4 H983 M958.6 126.8 V150.3 M978.6 126.8 V150.3"/>
</g>
<rect x="958.5" y="126.8" width="14" height="7.6" fill="none" stroke="#e25a5c" stroke-width="1"/>
<rect x="958.5" y="142.6" width="16.2" height="7.6" fill="none" stroke="#e25a5c" stroke-width="1"/>
<rect x="958.5" y="134.6" width="9.5" height="7.8" fill="none" stroke="#58a8ee" stroke-width="1"/>
<!-- format as table -->
<rect x="1044.3" y="134.4" width="20.5" height="16.3" fill="#1c6fc4"/>
<g stroke="#cfcfcf" stroke-width="1.1" stroke-linecap="butt">
<rect x="1034.5" y="126.8" width="30" height="23.5"/>
<path d="M1034.5 134.6 H1064.5 M1034.5 142.4 H1044.3 M1044.3 126.8 V150.3 M1054.5 126.8 V134.6"/>
</g>
<path d="M1054.5 134.6 V150.3 M1044.3 142.4 H1064.5" stroke="#58a8ee" stroke-width="0.9"/>
<path d="M1051.8 147.6 L1063.4 133.2 C1064.5 131.8 1066.3 132.8 1065.5 134.4 L1055.2 149.6" stroke="#e6e6e6" stroke-width="1.2" fill="#2a2a2a"/>
<path d="M1051.5 147.2 C1054 146.4 1056 148.4 1055 150.8 C1053.8 153.8 1049 155.2 1042.6 154.8 C1046 153.6 1047 151.8 1048 149.8 C1048.8 148.2 1050 147.6 1051.5 147.2 Z" fill="#2d86d8"/>
<!-- cell styles -->
<rect x="1105.2" y="132.1" width="19.2" height="12.8" fill="#1c6fc4"/>
<g stroke="#cfcfcf" stroke-width="1.1" stroke-linecap="butt">
<path d="M1100.5 126.8 H1129.8 V132.1 M1100.5 126.8 V150.3 H1109 M1100.5 132.1 H1129.8 M1105.2 126.8 V150.3 M1100.5 144.9 H1105.2"/>
</g>
<rect x="1105.2" y="132.1" width="19.2" height="12.8" fill="none" stroke="#58a8ee" stroke-width="0.9"/>
<path d="M1116.8 148 L1128.4 133.6 C1129.5 132.2 1131.3 133.2 1130.5 134.8 L1120.2 150" stroke="#e6e6e6" stroke-width="1.2" fill="#2a2a2a"/>
<path d="M1116.5 147.6 C1119 146.8 1121 148.8 1120 151.2 C1118.8 154.2 1114 155.6 1107.6 155.2 C1111 154 1112 152.2 1113 150.2 C1113.8 148.6 1115 148 1116.5 147.6 Z" fill="#2d86d8"/>
<!-- insert cells -->
<g stroke="#d4d4d4" stroke-width="1.1" stroke-linecap="butt">
<rect x="1174.5" y="122.6" width="16.3" height="14"/>
<rect x="1174.5" y="146.9" width="16.3" height="13.7"/>
<rect x="1174.5" y="171.4" width="16.3" height="14.2"/>
</g>
<g stroke="#bdbdbd" stroke-width="1" stroke-dasharray="1.3 1.1" stroke-linecap="butt">
<path d="M1174.5 127 H1190.8 M1174.5 132.3 H1190.8 M1180 122.6 V136.6 M1185.4 122.6 V136.6"/>
<path d="M1174.5 151.3 H1190.8 M1174.5 156.3 H1190.8 M1180 146.9 V160.6 M1185.4 146.9 V160.6"/>
<path d="M1174.5 176 H1190.8 M1174.5 181.2 H1190.8 M1180 171.4 V185.6 M1185.4 171.4 V185.6"/>
</g>
<rect x="1181.5" y="127" width="9.5" height="5.4" fill="#2f8ae0"/>
<path d="M1182 129.7 H1175.2 M1177.8 127.1 L1175.2 129.7 L1177.8 132.3" stroke="#3d9be3" stroke-width="1.3"/>
<rect x="1177.2" y="151" width="6.4" height="5.6" fill="#2f8ae0"/>
<path d="M1185.6 151.4 L1190.6 156.4 M1190.6 151.4 L1185.6 156.4" stroke="#e5484d" stroke-width="1.3"/>
<rect x="1179" y="176" width="8" height="5.4" fill="#2f8ae0"/>
<path d="M1177.4 170.2 H1188.4 M1177.4 168.8 V171.6 M1188.4 168.8 V171.6" stroke="#3d9be3" stroke-width="1.1"/>
<!-- sigma -->
<path d="M1301 125 V122.6 H1288.5 L1295.2 129.9 L1288.5 137.2 H1301 V134.8" stroke="#d8d8d8" stroke-width="1.3" stroke-linejoin="miter" stroke-linecap="butt"/>
<!-- fill down -->
<rect x="1286.5" y="147" width="16.6" height="13.6" stroke="#cfcfcf" stroke-width="1.1"/>
<path d="M1286.5 149.4 H1303.1" stroke="#cfcfcf" stroke-width="1.1"/>
<path d="M1294.8 151 V158 M1292.3 155.6 L1294.8 158.2 L1297.3 155.6" stroke="#3d9be3" stroke-width="1.3"/>
<!-- eraser -->
<path d="M1296 169.8 L1302.8 176.4 L1292.6 186 L1286 179.5 Z" stroke="#c65ad6" stroke-width="1.2"/>
<path d="M1286 179.5 L1289.6 176 L1296.2 182.4 L1292.6 186 Z" fill="#b84ac8"/>
<!-- sort filter -->
<path d="M1326.8 137.2 L1331.6 124.6 L1336.4 137.2 M1328.6 132.6 H1334.6" stroke="#3d9be3" stroke-width="1.35"/>
<path d="M1327 139.8 H1336 L1327 151.8 H1336.6" stroke="#cfcfcf" stroke-width="1.35" stroke-linejoin="miter" stroke-linecap="butt"/>
<path d="M1339.8 131 H1356.6 V132.5 L1349.6 139.5 V147.6 H1346.8 V139.5 L1339.8 132.5 Z" stroke="#d8d8d8" stroke-width="1.2"/>
<!-- find -->
<circle cx="1400.6" cy="134.3" r="11" stroke="#d8d8d8" stroke-width="1.3"/>
<path d="M1392.6 142.3 L1381 154" stroke="#d8d8d8" stroke-width="1.3"/>
<!-- add-ins -->
<g stroke="#cc4a22" stroke-width="1.4" stroke-linecap="butt">
<rect x="1475" y="123.5" width="30" height="30.5"/>
<rect x="1477.8" y="125.8" width="11.4" height="11.4"/>
<rect x="1491.4" y="125.8" width="11.4" height="11.4"/>
<rect x="1477.8" y="139.6" width="11.4" height="11.4"/>
<rect x="1491.4" y="139.6" width="11.4" height="11.4"/>
</g>

<!-- ===== sheet tabs ===== -->
<rect x="0" y="987" width="1600" height="28" fill="#323232"/>
<rect x="0" y="987" width="1600" height="0.8" fill="#262626"/>
<rect x="168" y="987" width="447" height="27" fill="#222222"/>
<path d="M66 987 H168 V1009 A2.5 2.5 0 0 1 165.5 1011.5 H68.5 A2.5 2.5 0 0 1 66 1009 Z" fill="#ffffff"/>
<rect x="0" y="1013.8" width="1600" height="2.4" fill="#1e1e1e"/>
<g fill="#555">
<rect x="256.2" y="989" width="1" height="21.5"/>
<rect x="395.5" y="989" width="1" height="21.5"/>
<rect x="498.6" y="989" width="1" height="21.5"/>
<rect x="614.3" y="989" width="1" height="21.5"/>
<rect x="655.6" y="989" width="1" height="21.5"/>
</g>
<path d="M24 997.2 V1008.2 L16.2 1002.7 Z M41.3 997.2 V1008.2 L49.1 1002.7 Z" fill="#6b6b6b"/>
<path d="M635.6 996.4 V1006.8 M630.4 1001.6 H640.8" stroke="#d4d4d4" stroke-width="2" stroke-linecap="butt"/>
<!-- status bar -->
<rect x="0" y="1016" width="1600" height="25" fill="url(#sbg)"/>
<defs><linearGradient id="sbg" x1="0" y1="0" x2="0" y2="1"><stop offset="0" stop-color="#4a4a4a"/><stop offset="1" stop-color="#3c3c3c"/></linearGradient></defs>
<rect x="1253" y="1016" width="40" height="25" fill="#575757"/>
<!-- accessibility icon -->
<g stroke="#e6e6e6" stroke-width="1.2">
<circle cx="95.2" cy="1022.2" r="1.6"/>
<path d="M88.6 1024.8 C91 1026 92.8 1026.2 95.2 1026 C97.6 1026.2 99.6 1026 102.2 1024.6 L101.6 1026.6 C99.8 1027.6 98.5 1028 97.6 1028.4 L96.8 1031.6 C96.6 1033 96 1034 94.6 1034.4 L91.8 1036.2 C90.8 1036.6 90.2 1035.8 90.8 1035 L92.6 1031.6 L92.8 1028.4 C91.4 1027.8 90 1027.2 88.8 1026.4 Z"/>
<path d="M97.5 1030.8 L103.8 1036.8 M103.8 1030.8 L97.5 1036.8"/>
</g>
<!-- view icons -->
<g stroke="#e8e8e8" stroke-width="1.2" stroke-linecap="butt">
<rect x="1266.3" y="1021.6" width="13.4" height="13.2" rx="1"/>
<path d="M1266.3 1026 H1279.7 M1266.3 1030.4 H1279.7 M1270.8 1021.6 V1034.8 M1275.2 1021.6 V1034.8"/>
<rect x="1304.5" y="1021.6" width="15" height="13.2" rx="1.5"/>
<rect x="1307.8" y="1024" width="8.4" height="8.4"/>
<path d="M1309.6 1026.6 H1314.4 M1309.6 1028.4 H1314.4 M1309.6 1030.2 H1314.4" stroke-width="0.8"/>
<path d="M1343.4 1021.6 H1358.4 V1034.8 H1343.4 Z M1343.4 1028 H1352.4 V1021.6 M1347.6 1021.6 V1028"/>
</g>
<path d="M1379.2 1028.4 H1387.8 M1512 1028.4 H1521.2 M1516.6 1023.8 V1033" stroke="#e8e8e8" stroke-width="2" stroke-linecap="butt"/>
<rect x="1395.3" y="1026.4" width="108.4" height="4" rx="2" fill="#7a7a7a"/>
<circle cx="1454.6" cy="1028.3" r="8.6" fill="#a8a8a8"/>
</svg>

<div class="t" style="left:22.40px;top:54.29px;font-size:13.24px;color:#e4e4e4;letter-spacing:0.005px;">Salvataggio automatico</div>
<div class="t" style="left:740.90px;top:54.74px;font-size:14.00px;color:#e4e4e4;letter-spacing:0.000px;">BilancioSemplificato</div>
<div class="t" style="left:1278.90px;top:55.94px;font-size:13.30px;color:#a6a6a6;font-weight:bold;-webkit-text-stroke:0px;letter-spacing:0.124px;">Cerca (CMD + CTRL + U)</div>
<div class="t" style="left:11.40px;top:88.99px;font-size:15.13px;color:#f0f0f0;font-weight:bold;letter-spacing:0.033px;">Home</div>
<div class="t" style="left:77.00px;top:88.93px;font-size:15.20px;color:#e4e4e4;letter-spacing:0.362px;">Inserisci</div>
<div class="t" style="left:161.40px;top:88.93px;font-size:15.20px;color:#e4e4e4;letter-spacing:0.133px;">Disegno</div>
<div class="t" style="left:244.30px;top:88.93px;font-size:15.20px;color:#e4e4e4;letter-spacing:-0.000px;">Layout di pagina</div>
<div class="t" style="left:382.40px;top:88.93px;font-size:15.20px;color:#e4e4e4;letter-spacing:0.117px;">Formule</div>
<div class="t" style="left:463.80px;top:88.93px;font-size:15.20px;color:#e4e4e4;letter-spacing:0.600px;">Dati</div>
<div class="t" style="left:517.50px;top:88.93px;font-size:15.20px;color:#e4e4e4;letter-spacing:-0.100px;">Revisione</div>
<div class="t" style="left:610.90px;top:88.93px;font-size:15.20px;color:#e4e4e4;letter-spacing:-0.056px;">Visualizza</div>
<div class="t" style="left:707.90px;top:88.93px;font-size:15.20px;color:#e4e4e4;letter-spacing:-0.030px;">Automatizza</div>
<div class="t" style="left:1380.60px;top:90.80px;font-size:15.12px;color:#f2f2f2;letter-spacing:0.014px;">Commenti</div>
<div class="t" style="left:1501.70px;top:90.69px;font-size:15.25px;color:#ffffff;letter-spacing:0.000px;">Condividi</div>
<div class="t" style="left:131.80px;top:129.83px;font-size:13.90px;color:#e4e4e4;letter-spacing:-0.005px;">Aptos Narrow (Cor...</div>
<div class="t" style="left:286.70px;top:129.86px;font-size:13.15px;color:#e4e4e4;letter-spacing:0.100px;">12</div>
<div class="t" style="left:17.50px;top:161.33px;font-size:11.90px;color:#8c8c8c;letter-spacing:0.250px;">Incolla</div>
<div class="t" style="left:621.40px;top:130.70px;font-size:12.40px;color:#e4e4e4;letter-spacing:-0.036px;">Testo a capo</div>
<div class="t" style="left:620.80px;top:165.70px;font-size:12.40px;color:#e4e4e4;letter-spacing:0.029px;">Unisci e centra</div>
<div class="t" style="left:747.60px;top:129.57px;font-size:13.62px;color:#e4e4e4;letter-spacing:0.000px;">Generale</div>
<div class="t" style="left:934.90px;top:160.50px;font-size:12.40px;color:#e4e4e4;letter-spacing:0.050px;">Formattazione</div>
<div class="t" style="left:940.10px;top:173.80px;font-size:12.40px;color:#e4e4e4;letter-spacing:0.073px;">condizionale</div>
<div class="t" style="left:1030.30px;top:160.50px;font-size:12.40px;color:#e4e4e4;letter-spacing:0.057px;">Formatta</div>
<div class="t" style="left:1020.70px;top:173.80px;font-size:12.40px;color:#e4e4e4;letter-spacing:-0.027px;">come tabella</div>
<div class="t" style="left:1110.40px;top:160.50px;font-size:12.40px;color:#e4e4e4;letter-spacing:0.425px;">Stili</div>
<div class="t" style="left:1108.10px;top:173.80px;font-size:12.40px;color:#e4e4e4;letter-spacing:-0.050px;">cella</div>
<div class="t" style="left:1196.70px;top:124.00px;font-size:12.40px;color:#e4e4e4;letter-spacing:0.188px;">Inserisci</div>
<div class="t" style="left:1196.80px;top:147.90px;font-size:12.40px;color:#e4e4e4;letter-spacing:-0.200px;">Elimina</div>
<div class="t" style="left:1196.80px;top:171.80px;font-size:12.40px;color:#e4e4e4;letter-spacing:0.050px;">Formato</div>
<div class="t" style="left:1329.40px;top:160.80px;font-size:12.40px;color:#e4e4e4;letter-spacing:-0.300px;">Ordina</div>
<div class="t" style="left:1329.50px;top:174.00px;font-size:12.40px;color:#e4e4e4;letter-spacing:0.257px;">e filtra</div>
<div class="t" style="left:1384.50px;top:160.80px;font-size:12.40px;color:#e4e4e4;letter-spacing:-0.333px;">Trova e</div>
<div class="t" style="left:1377.90px;top:174.00px;font-size:12.40px;color:#e4e4e4;letter-spacing:-0.137px;">seleziona</div>
<div class="t" style="left:1456.40px;top:160.80px;font-size:12.40px;color:#e4e4e4;letter-spacing:0.122px;">Componenti</div>
<div class="t" style="left:1463.10px;top:174.00px;font-size:12.40px;color:#e4e4e4;letter-spacing:0.267px;">aggiuntivi</div>
<div class="t" style="left:10.60px;top:201.30px;font-size:15.00px;color:#e4e4e4;letter-spacing:-1.500px;">E16</div>
<div class="t" style="left:84.10px;top:994.91px;font-size:13.33px;color:#1f8a4c;font-weight:bold;letter-spacing:0.012px;">Movimenti</div>
<div class="t" style="left:185.90px;top:994.52px;font-size:13.80px;color:#9a9a9a;letter-spacing:0.014px;">Cetgorie</div>
<div class="t" style="left:275.60px;top:994.52px;font-size:13.80px;color:#9a9a9a;letter-spacing:0.027px;">Bilancio Mensile</div>
<div class="t" style="left:413.40px;top:994.52px;font-size:13.80px;color:#9a9a9a;letter-spacing:0.000px;">Dashboard</div>
<div class="t" style="left:516.70px;top:994.52px;font-size:13.80px;color:#9a9a9a;letter-spacing:0.191px;">Impostazioni</div>
<div class="t" style="left:25.50px;top:1021.89px;font-size:13.60px;color:#d6d6d6;letter-spacing:0.260px;">Pronto</div>
<div class="t" style="left:110.50px;top:1021.89px;font-size:13.60px;color:#d6d6d6;letter-spacing:0.136px;">Accessibilità: verifica</div>
<div class="t" style="left:1539.40px;top:1021.59px;font-size:13.60px;color:#d6d6d6;letter-spacing:-0.600px;">131%</div>
<div class="t" style="left:132.20px;top:162.60px;font-size:15.24px;color:#e8e8e8;font-weight:bold;">G</div>
<div class="t" style="left:160.4px;top:162.6px;font-size:15px;color:#dcdcdc;font-style:italic;font-weight:normal;-webkit-text-stroke:0px">C</div>
<div class="t" style="left:190.20px;top:163.36px;font-size:13.75px;color:#e0e0e0;-webkit-text-stroke:0.1px;">S</div>


</body></html>
